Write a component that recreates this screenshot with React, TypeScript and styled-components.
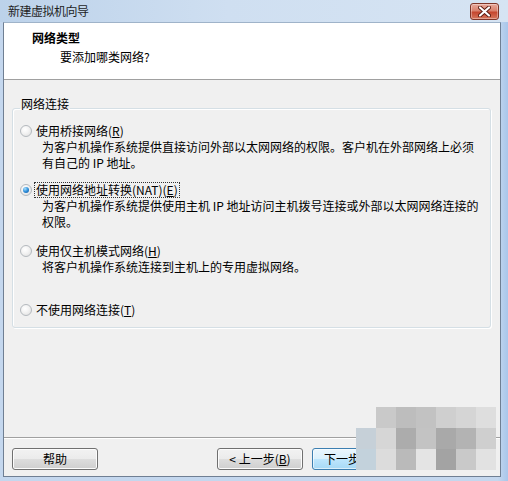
import React from "react";
import styled, { createGlobalStyle } from "styled-components";

const GlobalStyle = createGlobalStyle`
  html, body { margin: 0; padding: 0; background: #c5d8ee; }
  body { font-family: "Noto Sans CJK SC", "Liberation Sans", sans-serif; font-size: 12px; color: #000; }
  * { box-sizing: border-box; }
`;

const Window = styled.div`
  position: relative;
  width: 508px;
  height: 481px;
  display: flex;
  flex-direction: column;
  background: #c4d7ee;
  overflow: hidden;
`;

const TitleBar = styled.div`
  height: 22px;
  flex: none;
  display: flex;
  align-items: center;
  justify-content: space-between;
  padding: 0 9px 0 8px;
  background: linear-gradient(to right, #bcd2ea 0%, #cfdff1 45%, #d6e4f3 100%);
`;

const TitleText = styled.span`
  font-size: 12px;
  line-height: 16px;
  color: #1e1e1e;
  letter-spacing: -0.5px;
`;

const CloseButton = styled.div`
  width: 29px;
  height: 17px;
  margin-top: 1px;
  border: 1px solid #7f3528;
  border-radius: 3px;
  display: flex;
  align-items: center;
  justify-content: center;
  background: linear-gradient(to bottom, #e9a99b 0%, #d9816d 45%, #c5472f 55%, #d6765c 100%);
  box-shadow: inset 0 0 0 1px rgba(255, 255, 255, 0.35);
`;

const ClientFrame = styled.div`
  flex: 1;
  display: flex;
  padding: 0 7px 4px 3px;
  background: linear-gradient(to right, #c4d7ee, #c4d7ee 98%, #a8c6ea);
`;

const Client = styled.div`
  flex: 1;
  display: flex;
  flex-direction: column;
  border: 1px solid #6f7f93;
  border-top-color: #9fb3c9;
  background: #f0f0f0;
`;

const Header = styled.div`
  height: 57px;
  flex: none;
  background: #fff;
  border-bottom: 1px solid #a0a0a0;
  padding: 7px 0 0 28px;
`;

const HeaderTitle = styled.div`
  font-weight: bold;
  font-size: 12px;
  line-height: 16px;
`;

const HeaderSub = styled.div`
  font-size: 12px;
  line-height: 16px;
  margin-top: 3px;
  padding-left: 28px;
`;

const Body = styled.div`
  flex: 1;
  padding: 16px 9px 0 8px;
`;

const GroupBox = styled.fieldset`
  margin: 0;
  padding: 3px 0 9px 7px;
  border: 1px solid #d5dfe5;
  border-radius: 3px;
  box-shadow: inset 1px 1px 0 #fff, 1px 1px 0 #fff;
`;

const Legend = styled.legend`
  padding: 0 1px 8px;
  margin-left: 0;
  font-size: 12px;
  line-height: 16px;
`;

const OptionBlock = styled.div<{ $h?: number }>`
  height: ${(p) => (p.$h ? `${p.$h}px` : "auto")};
`;

const RadioRow = styled.div`
  display: flex;
  align-items: center;
  height: 16px;
`;

const RadioCircle = styled.span<{ $checked?: boolean }>`
  width: 12px;
  height: 12px;
  flex: none;
  border-radius: 50%;
  border: 1px solid #b4b9be;
  background: radial-gradient(circle at 40% 35%, #ffffff 0%, #f4f4f4 40%, #dcdcdc 100%);
  display: flex;
  align-items: center;
  justify-content: center;
  margin-right: 3px;
  &::after {
    content: "";
    display: ${(p) => (p.$checked ? "block" : "none")};
    width: 6px;
    height: 6px;
    border-radius: 50%;
    background: radial-gradient(circle at 35% 30%, #a8e0ff 0%, #2f8fd9 50%, #0d4f9c 100%);
  }
`;

const RadioLabel = styled.span<{ $focus?: boolean }>`
  font-size: 12px;
  line-height: 14px;
  padding: 0 1px;
  outline: ${(p) => (p.$focus ? "1px dotted #333" : "none")};
  outline-offset: 0;
`;

const Mn = styled.span`
  text-decoration: underline;
  text-underline-offset: 1px;
`;

const Desc = styled.div`
  padding-left: 22px;
  font-size: 12px;
  line-height: 16px;
  white-space: nowrap;
`;

const Footer = styled.div`
  height: 39px;
  flex: none;
  border-top: 1px solid #a0a0a0;
  box-shadow: inset 0 1px 0 #fff;
  display: flex;
  align-items: flex-start;
  padding: 10px 7px 0 8px;
`;

const Spacer = styled.div`
  flex: 1;
`;

const Button = styled.div<{ $default?: boolean }>`
  width: 86px;
  height: 22px;
  border-radius: 3px;
  border: 1px solid ${(p) => (p.$default ? "#3c7fb1" : "#707070")};
  display: flex;
  align-items: center;
  justify-content: center;
  font-size: 12px;
  line-height: 14px;
  color: #000;
  margin-left: 9px;
  background: ${(p) =>
    p.$default
      ? "linear-gradient(to bottom, #eaf6fd 0%, #d9f0fc 50%, #bee6fd 51%, #a7d9f5 100%)"
      : "linear-gradient(to bottom, #f2f2f2 0%, #ebebeb 50%, #dddddd 51%, #cfcfcf 100%)"};
  box-shadow: inset 0 0 0 1px ${(p) => (p.$default ? "rgba(255,255,255,0.6)" : "#fcfcfc")};
  &:first-child {
    margin-left: 0;
  }
`;

const Mosaic = styled.div`
  position: absolute;
  left: 356px;
  top: 407px;
  display: grid;
  grid-template-columns: repeat(7, 20px);
  grid-auto-rows: 21px;
`;

const Cell = styled.div<{ $c: string }>`
  background: ${(p) => p.$c};
`;

const mosaicColors = [
  "transparent", "#c9c9c9", "#bdbdbd", "#c2c2c2", "#cfcfcf", "#d5d5d5", "#dedede",
  "#c6d0d8", "#d6d6d6", "#acacac", "#c3c3c3", "#a9a9a9", "#b3b3b3", "#cfcfcf",
  "#c3d2dc", "#dcdcdc", "#bababa", "#e4e4e4", "#a3a3a3", "#c9c9c9", "#e2e2e2",
];

export default function App() {
  return (
    <>
      <GlobalStyle />
      <Window>
        <TitleBar>
          <TitleText>新建虚拟机向导</TitleText>
          <CloseButton>
            <svg width="13" height="11" viewBox="0 0 13 11">
              <path d="M2 1.5 L11 9.5 M11 1.5 L2 9.5" stroke="#5a1a10" strokeWidth="4" strokeLinecap="round" />
              <path d="M2 1.5 L11 9.5 M11 1.5 L2 9.5" stroke="#ffffff" strokeWidth="2.2" strokeLinecap="round" />
            </svg>
          </CloseButton>
        </TitleBar>
        <ClientFrame>
          <Client>
            <Header>
              <HeaderTitle>网络类型</HeaderTitle>
              <HeaderSub>要添加哪类网络?</HeaderSub>
            </Header>
            <Body>
              <GroupBox>
                <Legend>网络连接</Legend>
                <OptionBlock $h={59}>
                  <RadioRow>
                    <RadioCircle />
                    <RadioLabel>使用桥接网络(<Mn>R</Mn>)</RadioLabel>
                  </RadioRow>
                  <Desc>为客户机操作系统提供直接访问外部以太网网络的权限。客户机在外部网络上必须</Desc>
                  <Desc>有自己的 IP 地址。</Desc>
                </OptionBlock>
                <OptionBlock $h={61}>
                  <RadioRow>
                    <RadioCircle $checked />
                    <RadioLabel $focus>使用网络地址转换(NAT)(<Mn>E</Mn>)</RadioLabel>
                  </RadioRow>
                  <Desc>为客户机操作系统提供使用主机 IP 地址访问主机拨号连接或外部以太网网络连接的</Desc>
                  <Desc>权限。</Desc>
                </OptionBlock>
                <OptionBlock $h={59}>
                  <RadioRow>
                    <RadioCircle />
                    <RadioLabel>使用仅主机模式网络(<Mn>H</Mn>)</RadioLabel>
                  </RadioRow>
                  <Desc>将客户机操作系统连接到主机上的专用虚拟网络。</Desc>
                </OptionBlock>
                <OptionBlock>
                  <RadioRow>
                    <RadioCircle />
                    <RadioLabel>不使用网络连接(<Mn>T</Mn>)</RadioLabel>
                  </RadioRow>
                </OptionBlock>
              </GroupBox>
            </Body>
            <Footer>
              <Button>帮助</Button>
              <Spacer />
              <Button>&lt; 上一步(<Mn>B</Mn>)</Button>
              <Button $default>下一步(<Mn>N</Mn>) &gt;</Button>
              <Button>取消</Button>
            </Footer>
          </Client>
        </ClientFrame>
        <Mosaic>
          {mosaicColors.map((c, i) => (
            <Cell key={i} $c={c} />
          ))}
        </Mosaic>
      </Window>
    </>
  );
}
